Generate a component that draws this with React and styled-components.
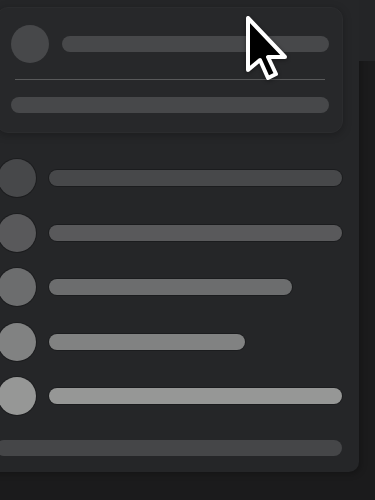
import styled, { createGlobalStyle } from 'styled-components';

const GlobalStyle = createGlobalStyle`
  html, body {
    margin: 0;
    padding: 0;
    background: #1b1b1c;
    font-family: Inter, "Liberation Sans", sans-serif;
  }
`;

const Page = styled.div`
  position: relative;
  width: 375px;
  height: 500px;
  overflow: hidden;
  display: flex;
  align-items: flex-start;
`;

const Panel = styled.div`
  flex: 0 0 375px;
  margin-left: -16px;
  box-sizing: border-box;
  padding: 7px 17px 16px 0;
  background: #252628;
  border-radius: 0 0 10px 0;
  box-shadow: 2px 2px 6px rgba(0, 0, 0, 0.25);
`;

const Side = styled.div`
  flex: 1;
  height: 61px;
  background: #242527;
`;

const Card = styled.div`
  margin-left: 12px;
  margin-right: -1px;
  padding: 17px 13px 19px 14px;
  background: #27282a;
  border: 1px solid #2b2c2e;
  border-radius: 12px;
  box-shadow: 0 2px 8px rgba(0, 0, 0, 0.25);
  display: flex;
  flex-direction: column;
`;

const CardHead = styled.div`
  display: flex;
  align-items: center;
  gap: 13px;
`;

const Avatar = styled.div`
  flex: 0 0 38px;
  height: 38px;
  border-radius: 50%;
  background: ${p => p.$color};
  box-shadow: ${p => (p.$edge ? '0 0 0 1px rgba(0, 0, 0, 0.25)' : 'none')};
`;

const Bar = styled.div`
  height: 16px;
  border-radius: 8px;
  background: ${p => p.$color};
  width: ${p => p.$width || 'auto'};
  flex: ${p => (p.$width ? '0 0 auto' : '1 1 auto')};
  box-shadow: ${p => (p.$edge ? '0 0 0 1px rgba(0, 0, 0, 0.25)' : 'none')};
`;

const WideBar = styled.div`
  flex: none;
  height: 16px;
  border-radius: 8px;
  background: ${p => p.$color};
`;

const Divider = styled.div`
  height: 1px;
  margin: 16px 4px 17px;
  background: #58595a;
`;

const List = styled.div`
  margin-top: 26px;
  padding-left: 14px;
  display: flex;
  flex-direction: column;
  gap: 16.5px;
`;

const Row = styled.div`
  display: flex;
  align-items: center;
  gap: 13px;
`;

const FooterBar = styled(WideBar)`
  margin: 25px 0 0 12px;
`;

const Cursor = styled.svg`
  position: absolute;
  left: 240px;
  top: 12px;
  filter: drop-shadow(0 1px 2px rgba(0, 0, 0, 0.4));
`;

const rows = [
  { color: '#47484a', width: null },
  { color: '#59595b', width: null },
  { color: '#6c6d6e', width: '243px' },
  { color: '#818282', width: '196px' },
  { color: '#969796', width: null },
];

export default function App() {
  return (
    <Page>
      <GlobalStyle />
      <Panel>
        <Card>
          <CardHead>
            <Avatar $color="#47484a" />
            <Bar $color="#47484a" />
          </CardHead>
          <Divider />
          <WideBar $color="#47484a" />
        </Card>
        <List>
          {rows.map((r, i) => (
            <Row key={i}>
              <Avatar $color={r.color} $edge />
              <Bar $color={r.color} $width={r.width} $edge />
            </Row>
          ))}
        </List>
        <FooterBar $color="#454648" />
      </Panel>
      <Side />
      <Cursor width="56" height="76" viewBox="0 0 56 76">
        <path
          d="M8 6 L8 58 L20 48 L28 66 L36 62 L28 45 L45 45 Z"
          fill="#000"
          stroke="#fff"
          strokeWidth="4"
          strokeLinejoin="round"
        />
      </Cursor>
    </Page>
  );
}
